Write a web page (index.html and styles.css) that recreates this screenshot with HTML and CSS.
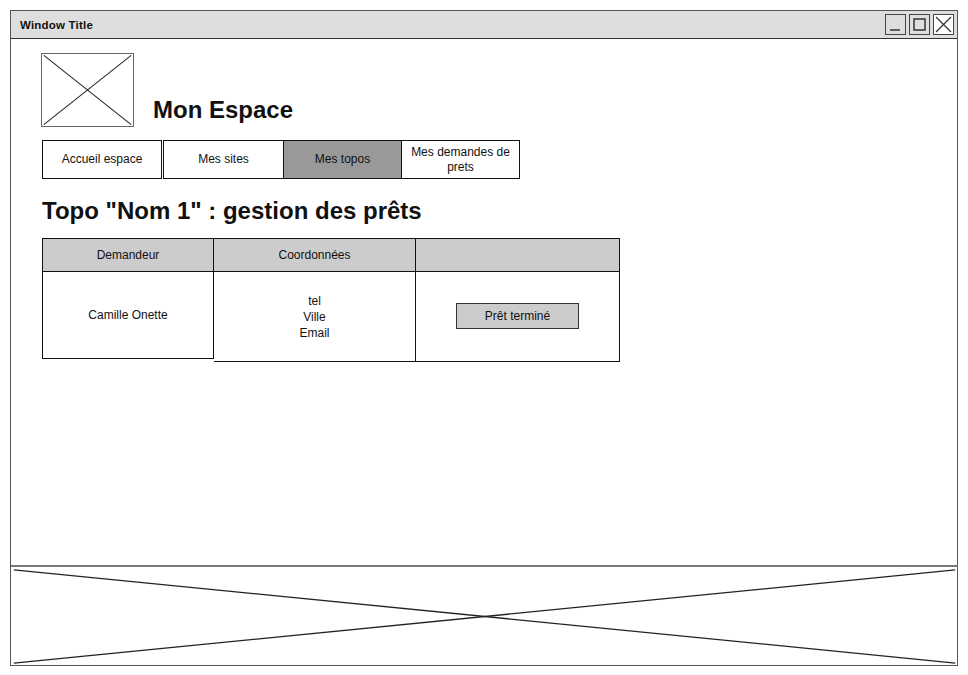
FILE: index.html
```html
<!DOCTYPE html>
<html lang="fr">
<head>
<meta charset="utf-8">
<title>Mon Espace</title>
<link rel="stylesheet" href="styles.css">
</head>
<body>
<div class="window">
  <div class="titlebar">
    <span class="title">Window Title</span>
    <div class="controls">
      <span class="ctl"><svg width="19" height="19" viewBox="0 0 19 19"><line x1="4" y1="15" x2="14" y2="15" stroke="#333" stroke-width="1.5"/></svg></span>
      <span class="ctl"><svg width="19" height="19" viewBox="0 0 19 19"><rect x="4" y="4" width="11" height="11" fill="none" stroke="#333" stroke-width="1.5"/></svg></span>
      <span class="ctl"><svg width="19" height="19" viewBox="0 0 19 19"><line x1="2" y1="2" x2="17" y2="17" stroke="#333" stroke-width="1.2"/><line x1="17" y1="2" x2="2" y2="17" stroke="#333" stroke-width="1.2"/></svg></span>
    </div>
  </div>
  <div class="main">
    <div class="header">
      <div class="logo"><svg width="100%" height="100%" viewBox="0 0 100 100" preserveAspectRatio="none"><line x1="2" y1="2" x2="98" y2="98" stroke="#222" stroke-width="1" vector-effect="non-scaling-stroke"/><line x1="98" y1="2" x2="2" y2="98" stroke="#222" stroke-width="1" vector-effect="non-scaling-stroke"/></svg></div>
      <h1 class="page-title">Mon Espace</h1>
    </div>
    <nav class="tabs">
      <div class="tab tab-a">Accueil espace</div>
      <div class="tab tab-b">Mes sites</div>
      <div class="tab tab-c active">Mes topos</div>
      <div class="tab tab-d">Mes demandes de prets</div>
    </nav>
    <h2 class="section-title">Topo "Nom 1" : gestion des prêts</h2>
    <div class="table">
      <div class="col col1">
        <div class="th">Demandeur</div>
        <div class="td td1">Camille Onette</div>
      </div>
      <div class="col col2">
        <div class="th">Coordonnées</div>
        <div class="td td2">tel<br>Ville<br>Email</div>
      </div>
      <div class="col col3">
        <div class="th"></div>
        <div class="td td2"><span class="btn">Prêt terminé</span></div>
      </div>
    </div>
  </div>
  <div class="footer"><svg width="100%" height="100%" viewBox="0 0 100 100" preserveAspectRatio="none"><line x1="0.3" y1="3" x2="99.7" y2="97" stroke="#222" stroke-width="1.3" vector-effect="non-scaling-stroke"/><line x1="99.7" y1="3" x2="0.3" y2="97" stroke="#222" stroke-width="1.3" vector-effect="non-scaling-stroke"/></svg></div>
</div>
</body>
</html>
```

FILE: styles.css
```css
* { box-sizing: border-box; }
html, body { margin: 0; padding: 0; background: #fff; }
body { font-family: "Liberation Sans", Arial, sans-serif; color: #111; }

.window {
  margin: 10px 0 0 10px;
  width: 948px;
  height: 656px;
  border: 1.5px solid #555;
  display: flex;
  flex-direction: column;
}

.titlebar {
  height: 28px;
  background: #dedede;
  border-bottom: 1px solid #333;
  display: flex;
  align-items: center;
  justify-content: space-between;
  padding: 0 3px 0 9px;
}
.title { font-size: 11.5px; font-weight: bold; letter-spacing: 0.2px; }
.controls { display: flex; gap: 3px; }
.ctl {
  width: 21px; height: 21px;
  border: 1px solid #444;
  background: #fff;
  display: flex; align-items: center; justify-content: center;
}
.ctl:first-child, .ctl:nth-child(2) { background: transparent; }

.main { flex: 1; padding: 14px 0 0 30px; }

.header { display: flex; align-items: flex-end; }
.logo {
  width: 93px; height: 74px;
  border: 1.5px solid #666;
  background: #fff;
}
.page-title {
  margin: 0 0 3px 19px;
  font-size: 24px;
  font-weight: bold;
  line-height: 28px;
}

.tabs { display: flex; margin-top: 13px; height: 39px; margin-left: 1px; }
.tab {
  border: 1px solid #111;
  display: flex; align-items: center; justify-content: center;
  text-align: center;
  font-size: 12px;
  line-height: 15px;
  background: #fff;
}
.tab-a { width: 120px; margin-right: 1px; }
.tab-b { width: 120px; border-right: none; }
.tab-c { width: 119px; }
.tab-d { width: 118px; border-left: none; padding: 0 4px; }
.tab.active { background: #999; }

.section-title {
  margin: 18px 0 0 1px;
  font-size: 24px;
  font-weight: bold;
  line-height: 28px;
}

.table { display: flex; margin-top: 13px; margin-left: 1px; align-items: flex-start; }
.col { display: flex; flex-direction: column; border: 1px solid #111; }
.col1 { width: 172px; }
.col2 { width: 202px; border-left: none; }
.col3 { width: 204px; border-left: none; }
.th {
  height: 33px;
  background: #cccccc;
  border-bottom: 1px solid #111;
  display: flex; align-items: center; justify-content: center;
  font-size: 12px;
}
.td {
  display: flex; align-items: center; justify-content: center;
  text-align: center;
  font-size: 12px;
  line-height: 16px;
}
.td1 { height: 86px; }
.td2 { height: 89px; }
.btn {
  width: 123px; height: 26px;
  background: #cccccc;
  border: 1px solid #333;
  display: flex; align-items: center; justify-content: center;
  font-size: 12px;
  margin-top: -1px;
}

.footer {
  height: 101px;
  border-top: 2px solid #777;
  margin: 0 -0.5px -0.5px;
}
.footer svg { display: block; }
```
